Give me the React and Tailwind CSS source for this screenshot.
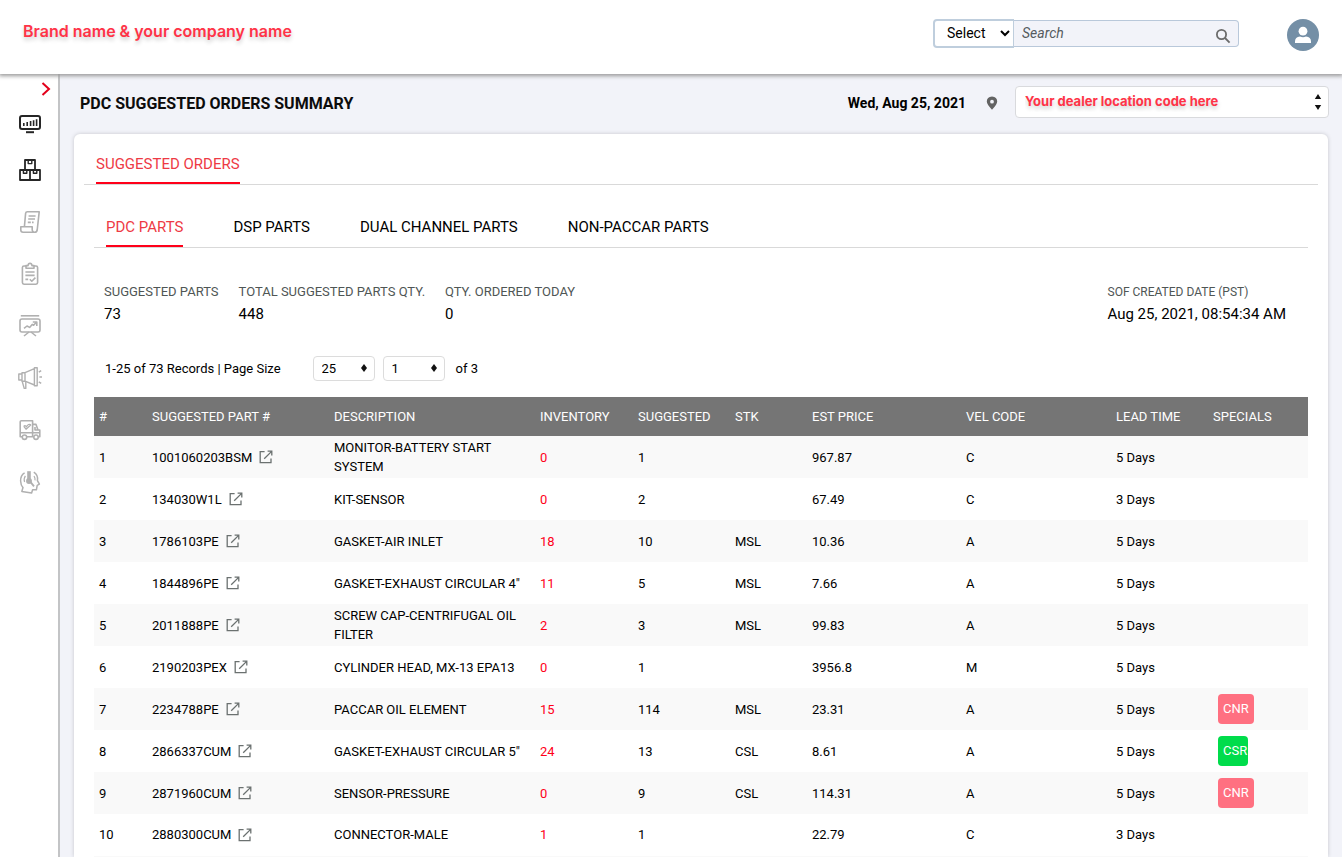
import React, { useState } from 'react';
import clsx from 'clsx';

const PART_TABS = ['PDC PARTS', 'DSP PARTS', 'DUAL CHANNEL PARTS', 'NON-PACCAR PARTS'];

const TOTALS = [
  { label: 'SUGGESTED PARTS', value: '73' },
  { label: 'TOTAL SUGGESTED PARTS QTY.', value: '448' },
  { label: 'QTY. ORDERED TODAY', value: '0' },
];

const COLUMNS = [
  { label: '#', width: 'w-[53px]' },
  { label: 'SUGGESTED PART #', width: 'w-[182px]' },
  { label: 'DESCRIPTION', width: 'w-[206px]' },
  { label: 'INVENTORY', width: 'w-[98px]' },
  { label: 'SUGGESTED', width: 'w-[97px]' },
  { label: 'STK', width: 'w-[77px]' },
  { label: 'EST PRICE', width: 'w-[154px]' },
  { label: 'VEL CODE', width: 'w-[150px]' },
  { label: 'LEAD TIME', width: 'w-[97px]' },
  { label: 'SPECIALS', width: 'w-[100px]' },
];

const PARTS = [
  { part: '1001060203BSM', description: 'MONITOR-BATTERY START SYSTEM', inventory: 0, suggested: 1, stk: '', price: '967.87', vel: 'C', lead: '5 Days' },
  { part: '134030W1L', description: 'KIT-SENSOR', inventory: 0, suggested: 2, stk: '', price: '67.49', vel: 'C', lead: '3 Days' },
  { part: '1786103PE', description: 'GASKET-AIR INLET', inventory: 18, suggested: 10, stk: 'MSL', price: '10.36', vel: 'A', lead: '5 Days' },
  { part: '1844896PE', description: 'GASKET-EXHAUST CIRCULAR 4"', inventory: 11, suggested: 5, stk: 'MSL', price: '7.66', vel: 'A', lead: '5 Days' },
  { part: '2011888PE', description: 'SCREW CAP-CENTRIFUGAL OIL FILTER', inventory: 2, suggested: 3, stk: 'MSL', price: '99.83', vel: 'A', lead: '5 Days' },
  { part: '2190203PEX', description: 'CYLINDER HEAD, MX-13 EPA13', inventory: 0, suggested: 1, stk: '', price: '3956.8', vel: 'M', lead: '5 Days' },
  { part: '2234788PE', description: 'PACCAR OIL ELEMENT', inventory: 15, suggested: 114, stk: 'MSL', price: '23.31', vel: 'A', lead: '5 Days', special: 'CNR' },
  { part: '2866337CUM', description: 'GASKET-EXHAUST CIRCULAR 5"', inventory: 24, suggested: 13, stk: 'CSL', price: '8.61', vel: 'A', lead: '5 Days', special: 'CSR' },
  { part: '2871960CUM', description: 'SENSOR-PRESSURE', inventory: 0, suggested: 9, stk: 'CSL', price: '114.31', vel: 'A', lead: '5 Days', special: 'CNR' },
  { part: '2880300CUM', description: 'CONNECTOR-MALE', inventory: 1, suggested: 1, stk: '', price: '22.79', vel: 'C', lead: '3 Days' },
];

function NavIcon({ children, strokeWidth = 1.6 }) {
  return (
    <svg
      viewBox="0 0 24 24"
      className="h-6 w-6"
      fill="none"
      stroke="currentColor"
      strokeWidth={strokeWidth}
      strokeLinejoin="round"
      aria-hidden="true"
    >
      {children}
    </svg>
  );
}

const NAV_ITEMS = [
  {
    label: 'Dashboard',
    active: true,
    icon: (
      <NavIcon strokeWidth={2}>
        <rect x="2" y="4" width="20" height="13" rx="2" />
        <path d="M8 20.2h8" />
        <path d="M5.8 14v-3M9.2 14v-4M12.6 14v-5M15.6 14V8.3M18.6 14V7.3" strokeWidth="1.6" />
      </NavIcon>
    ),
  },
  {
    label: 'Suggested orders',
    active: true,
    icon: (
      <NavIcon strokeWidth={1.8}>
        <path d="M7 2h10v10H7zM2 12h10v10H2zM12 12h10v10H12z" />
        <path d="M10.2 2v3.6h3.6V2M5.4 12v3.2h3.4V12M15.4 12v3.2h3.4V12" strokeWidth="1.4" />
      </NavIcon>
    ),
  },
  {
    label: 'Invoices',
    icon: (
      <NavIcon>
        <path d="M6.4 16.800 7.600 3.400Q7.800 1.800 9.400 1.800H21.200L19.200 20Q18.800 22.200 16.600 22.200H5Q2.800 22.200 2.800 20V16.800h11.400v3q.2 2.400 2.200 2.400" />
        <path d="M10.6 6h7M10.2 9h6.8M9.8 12.400h3M14 12.400h1.600" />
      </NavIcon>
    ),
  },
  {
    label: 'Orders',
    icon: (
      <NavIcon>
        <path d="M8 4H6Q4.400 4 4.400 5.600V20.600Q4.400 22.200 6 22.200H18Q19.600 22.200 19.600 20.600V5.600Q19.600 4 18 4H16" />
        <path d="M8 6.200V3.600H10Q10.200 1.400 12 1.400T14 3.600H16V6.200Z" />
        <path d="M7.400 10h9.200M7.400 13.400h9.200M7.400 17.400h2.800M11.800 17.200l2 2 3.600-3.600" />
      </NavIcon>
    ),
  },
  {
    label: 'Reports',
    icon: (
      <NavIcon>
        <path d="M2.800 1.800h18.400" />
        <rect x="2" y="5" width="20" height="13" rx="2" />
        <path d="M6 14.400l3-2.400 2.600 1.400 2.600-3 1.400.8 2.800-3M14.800 8h4v4" />
        <path d="M11 18l-5 4M13 18l5 4" />
      </NavIcon>
    ),
  },
  {
    label: 'Campaigns',
    icon: (
      <NavIcon strokeWidth={1.4}>
        <path d="M.8 8h3.200v6H.8zM4 6.800h3v8.400H4zM7 6.600l9.400-4v16.400l-9.400-3.800M16.400 1.800h2.800v18h-2.800z" />
        <path d="M4.200 15.400l2 7h1.600v-6.800M20.800 6.200l2.400-1.600M21.400 11h2.600M20.800 15.800l2.400 1.600" />
      </NavIcon>
    ),
  },
  {
    label: 'Shipping',
    icon: (
      <NavIcon>
        <path d="M4 18.800H2.200V3.800Q2.200 2.800 3.400 2.800H14.600V18.800H8.800M14.600 6.400H18L20 12H21.800V18.800H20.400M15.600 18.800h-1M2.200 14.800h19.400M17 9v3h3" />
        <circle cx="6.500" cy="19.200" r="2.200" />
        <circle cx="18" cy="19.200" r="2.200" />
        <path d="M5.800 8.400 8 11.200l5-4.400M5.800 8.400q1.200-1.600 2.600.4Q10.400 5.200 13 6.800" strokeWidth="1.300" />
      </NavIcon>
    ),
  },
  {
    label: 'Support',
    icon: (
      <NavIcon strokeWidth={1.5}>
        <path d="M6.600 2.800Q2.400 5.400 2.600 11 2.800 15.400 5 17.600L3.800 21.400 13.600 23l1-3.200h3.800l.8-4.400 2.200-1.200-2-3.600Q20.400 5 15.800 2.200" />
        <path d="M11 1.200v9" strokeWidth="3.600" />
        <path d="M12 11.400l4 5" strokeWidth="1.800" />
        <path d="M7.400 5.800Q5.400 8.600 6.600 12M16 6q1.400 2 1 4.400" strokeWidth="1.200" />
        <circle cx="11" cy="11" r="2.200" fill="currentColor" />
      </NavIcon>
    ),
  },
];

function OpenIcon() {
  return (
    <svg viewBox="0 0 14 14" className="h-3.5 w-3.5" fill="none" stroke="#6b7170" strokeWidth="1.3" aria-hidden="true">
      <path d="M5.600 1.600H1.200V12.600H12V8.600" />
      <path d="M5.200 8.800 12.400 1.600M8.600 1.200H12.800V5.400" />
    </svg>
  );
}

function Header() {
  return (
    <header className="relative z-10 flex h-[74px] items-center justify-between bg-white px-[23px] shadow-[0_1px_4px_1px_#999]">
      <a href="#home" className="pb-3 font-['Inter'] text-base font-semibold text-[#ff3347] [text-shadow:0_3px_4px_#00000033]">
        Brand name &amp; your company name
      </a>
      <div className="flex items-center gap-12 pb-1">
        <form className="flex items-center pb-1" onSubmit={(e) => e.preventDefault()}>
          <select
            aria-label="Search type"
            className="h-[29px] w-[81px] rounded-l border-2 border-r border-[#bfcedd] bg-white pl-2 text-sm text-black"
          >
            <option>Select</option>
          </select>
          <div className="relative">
            <input
              type="search"
              aria-label="Search"
              placeholder="Search"
              className="block h-[27px] w-[225px] rounded-r border border-l-0 border-[#b9c8da] bg-[#f2f3f9] pr-8 pl-2 text-sm italic placeholder:text-[#555b5f]"
            />
            <button type="submit" aria-label="Run search" className="absolute top-2 right-2 h-4 w-4">
              <svg viewBox="0 0 16 16" fill="none" stroke="#6b6b6b" strokeWidth="1.8" aria-hidden="true">
                <circle cx="6.500" cy="6.500" r="4.600" />
                <path d="M10 10l4.600 4.600" />
              </svg>
            </button>
          </div>
        </form>
        <button type="button" aria-label="Account" className="h-8 w-8">
          <svg viewBox="0 0 32 32" aria-hidden="true">
            <circle cx="16" cy="16" r="16" fill="#748fa6" />
            <circle cx="16" cy="12.200" r="4.400" fill="#fff" />
            <path d="M8 24v-1.600q0-4.200 5-4.800 3 1.400 6 0 5 .6 5 4.800V24z" fill="#fff" />
          </svg>
        </button>
      </div>
    </header>
  );
}

function Sidebar() {
  return (
    <aside className="w-[60px] shrink-0 border-r-2 border-[#c3c4c6] bg-white">
      <button type="button" aria-label="Expand menu" className="mt-2 ml-10 block h-3.5 w-3">
        <svg viewBox="0 0 12 14" fill="none" stroke="#e3001b" strokeWidth="2" aria-hidden="true">
          <path d="M2.500 1l6.500 6-6.500 6" />
        </svg>
      </button>
      <nav className="mt-4 flex flex-col items-center gap-7 pl-0.5">
        {NAV_ITEMS.map((item, index) => (
          <a
            key={item.label}
            href="#nav"
            aria-label={item.label}
            className={clsx(item.active ? 'text-[#262626]' : 'text-[#b0b0b0]', index === 1 && '-mt-1.5')}
          >
            {item.icon}
          </a>
        ))}
      </nav>
    </aside>
  );
}

function TitleBar() {
  return (
    <div className="mb-1 flex h-14 items-center pr-[13px] pl-5">
      <h1 className="flex-1 pt-1 text-base font-bold text-[#0c0c0c]">PDC SUGGESTED ORDERS SUMMARY</h1>
      <p className="mr-5 pt-0.5 text-sm font-bold text-black">Wed, Aug 25, 2021</p>
      <svg viewBox="0 0 12 14" className="mt-0.5 mr-[17px] h-3.5 w-3" fill="#636363" aria-hidden="true">
        <path
          fillRule="evenodd"
          d="M6 .5Q.8.8.8 5.600.8 8.400 6 13.800 11.200 8.400 11.200 5.600 11.200.8 6 .5M6 3.800a1.900 1.900 0 1 1 0 3.800 1.900 1.900 0 0 1 0-3.800"
        />
      </svg>
      <div className="relative">
        <select
          aria-label="Dealer location"
          className="h-8 w-[314px] appearance-none rounded border border-[#d9dadd] bg-white pl-[9px] font-['Inter'] text-[13px] font-bold text-[#ff3347] [text-shadow:0_3px_4px_#00000033]"
        >
          <option>Your dealer location code here</option>
        </select>
        <svg viewBox="0 0 8 16" className="pointer-events-none absolute top-2 right-[7px] h-4 w-2" aria-hidden="true">
          <path d="M.8 5 4 0 7.200 5zM.8 11h6.400L4 16z" fill="#111" />
        </svg>
      </div>
    </div>
  );
}

function PagerSelect({ label, value }) {
  return (
    <div className="relative">
      <select
        aria-label={label}
        className="h-[25px] w-[62px] appearance-none rounded border border-[#dcdcdc] bg-white pl-2 text-[13px] text-black"
      >
        <option>{value}</option>
      </select>
      <svg viewBox="0 0 6 8" className="pointer-events-none absolute top-2 right-2 h-2 w-1.5" aria-hidden="true">
        <path d="M3 0 6 4 3 8 0 4z" fill="#111" />
      </svg>
    </div>
  );
}

function PartsTable() {
  return (
    <table className="w-full table-fixed border-b border-[#f9f9f9] text-left text-[13px] leading-[19px] text-black">
      <thead>
        <tr className="h-[39px] bg-[#757575] text-white">
          {COLUMNS.map((column) => (
            <th key={column.label} scope="col" className={clsx(column.width, 'pl-[5px] font-normal')}>
              {column.label}
            </th>
          ))}
        </tr>
      </thead>
      <tbody>
        {PARTS.map((row, index) => (
          <tr key={row.part} className="h-[42px] odd:bg-[#f9f9f9]">
            <td className="pl-[5px]">{index + 1}</td>
            <td className="pl-[5px]">
              <a href="#part" className="flex items-center gap-[7px]">
                {row.part}
                <OpenIcon />
              </a>
            </td>
            <td className="pl-[5px]">{row.description}</td>
            <td className="pl-[5px] text-[#ff0019]">{row.inventory}</td>
            <td className="pl-[5px]">{row.suggested}</td>
            <td className="pl-[5px]">{row.stk}</td>
            <td className="pl-[5px]">{row.price}</td>
            <td className="pl-[5px]">{row.vel}</td>
            <td className="pl-[5px]">{row.lead}</td>
            <td className="pl-2.5">
              {row.special && (
                <span
                  className={clsx(
                    'block h-[30px] rounded pl-[5px] leading-[30px] text-white',
                    row.special === 'CSR' ? 'w-[30px] bg-[#00dc4b]' : 'w-9 bg-[#ff7081]',
                  )}
                >
                  {row.special}
                </span>
              )}
            </td>
          </tr>
        ))}
      </tbody>
    </table>
  );
}

function OrdersCard() {
  const [tab, setTab] = useState(PART_TABS[0]);

  return (
    <section className="mx-3.5 flex-1 rounded-t-md bg-white px-2.5 shadow-[0_0_4px_#0000002e]">
      <div className="flex h-[51px] items-end border-b border-[#d9d9d9] pl-3">
        <button type="button" className="border-b-2 border-[#ff0019] pb-1.5 text-[15px] leading-6 text-[#ee3a45]">
          SUGGESTED ORDERS
        </button>
      </div>

      <div className="px-2.5">
        <div className="flex h-[63px] items-end gap-[50px] border-b border-[#d9d9d9] pl-3">
          {PART_TABS.map((name) => (
            <button
              key={name}
              type="button"
              onClick={() => setTab(name)}
              className={clsx(
                'border-b-2 pb-1.5 text-[15px] leading-6',
                tab === name ? 'border-[#ff0019] text-[#ee3a45]' : 'border-transparent text-black',
              )}
            >
              {name}
            </button>
          ))}
        </div>

        <div className="flex justify-between pt-8 pr-[22px] pl-2.5">
          <dl className="flex gap-5">
            {TOTALS.map((item) => (
              <div key={item.label}>
                <dt className="text-[13px] leading-6 text-[#4f5655]">{item.label}</dt>
                <dd className="text-[15px] leading-5 text-black">{item.value}</dd>
              </div>
            ))}
          </dl>
          <dl>
            <dt className="text-xs leading-6 text-[#4f5655]">SOF CREATED DATE (PST)</dt>
            <dd className="text-[15px] leading-5 text-black">Aug 25, 2021, 08:54:34 AM</dd>
          </dl>
        </div>

        <div className="flex items-center gap-2 pt-8 pb-4 pl-[11px] text-[13px] text-black">
          <p className="mr-6">1-25 of 73 Records | Page Size</p>
          <PagerSelect label="Page size" value="25" />
          <PagerSelect label="Page" value="1" />
          <p className="ml-[3px]">of 3</p>
        </div>

        <PartsTable />
      </div>
    </section>
  );
}

export default function App() {
  return (
    <div className="flex min-h-screen flex-col bg-[#f2f3f9] font-['Roboto',sans-serif]">
      <Header />
      <div className="flex flex-1">
        <Sidebar />
        <main className="flex min-w-0 flex-1 flex-col">
          <TitleBar />
          <OrdersCard />
        </main>
      </div>
    </div>
  );
}
